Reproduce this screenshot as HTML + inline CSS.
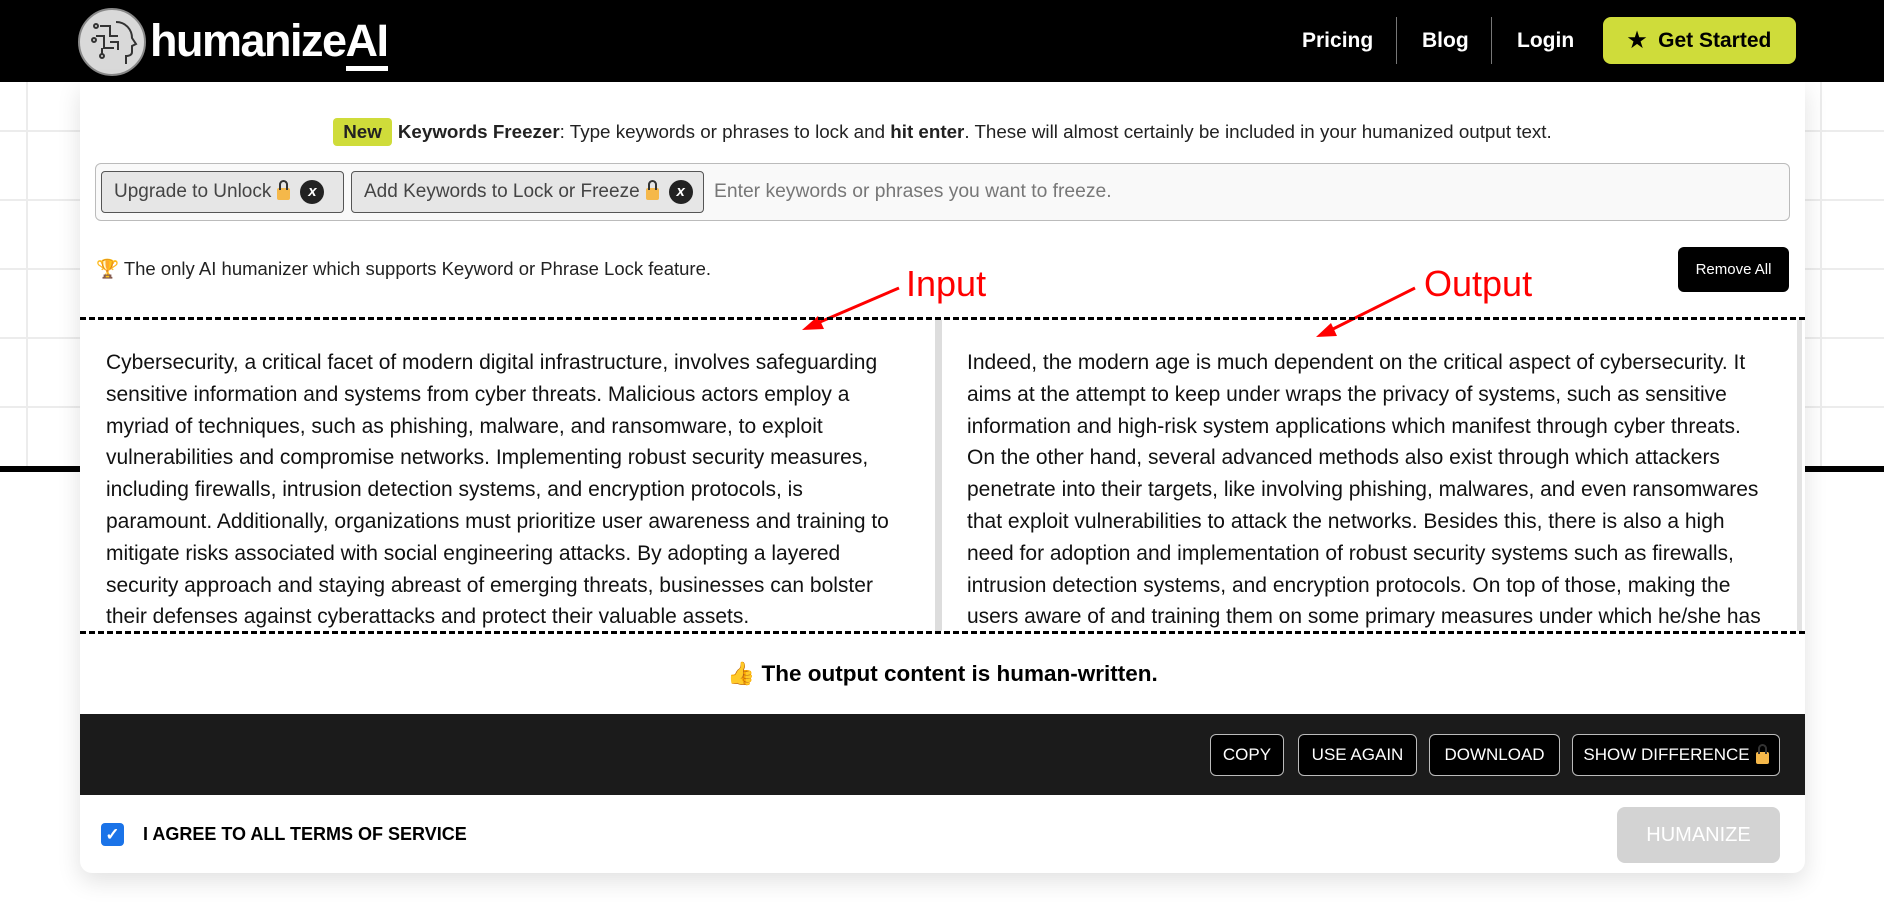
<!DOCTYPE html>
<html><head><meta charset="utf-8"><style>
*{box-sizing:border-box;margin:0;padding:0}
html,body{width:1884px;height:917px;overflow:hidden;background:#fff;font-family:"Liberation Sans",sans-serif;position:relative}
.grid{position:absolute;left:0;top:82px;width:1884px;height:387px;
background-image:linear-gradient(#ececec 2px,transparent 2px),linear-gradient(90deg,#ececec 2px,transparent 2px);
background-size:69px 69px;background-position:26px 48px;}
.thick{position:absolute;left:0;top:466px;width:1884px;height:6px;background:#000}
header{position:absolute;left:0;top:0;width:1884px;height:82px;background:#000}
.logo{position:absolute;left:78px;top:8px;width:68px;height:68px;border-radius:50%;background:#d9d9d9;border:2px solid #888}
.brand{position:absolute;left:150px;top:15px;color:#fff;font-weight:bold;font-size:45px;letter-spacing:-1.5px}
.brand u{text-decoration:none;border-bottom:5px solid #fff;padding-bottom:0}
.nav{position:absolute;top:29px;color:#fff;font-weight:bold;font-size:21px}
.div{position:absolute;top:17px;width:1px;height:47px;background:#777}
.gs{position:absolute;left:1603px;top:17px;width:193px;height:47px;background:#cfdc3a;border-radius:8px;font-weight:bold;font-size:21px;color:#000;text-align:center;line-height:47px}
.card{position:absolute;left:80px;top:82px;width:1725px;height:791px;background:#fff;border-radius:0 0 12px 12px;box-shadow:0 8px 24px rgba(0,0,0,.12)}
.abs{position:absolute}
.kf{left:0;width:1725px;top:36px;text-align:center;font-size:18.8px;color:#222}
.new{display:inline-block;background:#cfdc3a;border-radius:4px;padding:3px 10px;font-weight:bold;margin-right:6px}
.inbox{left:15px;top:81px;width:1695px;height:58px;border:1px solid #bbb;border-radius:6px;background:#f9f9f9}
.chip{position:absolute;top:7px;height:42px;border:1px solid #555;border-radius:4px;background:#e6e6e6;font-size:19px;color:#444;line-height:40px;padding-left:12px;white-space:nowrap}
.x{display:inline-block;width:24px;height:24px;border-radius:50%;background:#222;color:#fff;font-size:15px;font-weight:bold;font-style:italic;text-align:center;line-height:24px;vertical-align:middle;margin-left:10px}
.lock{display:inline-block;width:13px;height:12px;background:#f5b84a;border-radius:2px;position:relative;vertical-align:middle;margin-left:6px;margin-top:4px}
.lock:before{content:"";position:absolute;left:2px;top:-8px;width:5px;height:8px;border:2px solid #333;border-bottom:none;border-radius:5px 5px 0 0}
.txt{font-size:21px;line-height:31.8px;color:#111;white-space:nowrap}
.btn{position:absolute;top:20px;height:42px;background:#000;border:1px solid #bbb;border-radius:6px;color:#fff;font-size:17px;line-height:40px;text-align:center}
</style></head><body>
<div class="grid"></div><div class="thick"></div>
<header>
<div class="logo"><svg width="64" height="64" viewBox="0 0 64 64"><g fill="none" stroke="#333" stroke-width="2"><path d="M36 12c10 0 16 8 16 16l4 6-4 2v6c0 3-3 4-6 4v8"/><path d="M20 16h10v10h8M16 26h8v12h10M22 44v-6M30 32h8v8"/><circle cx="16" cy="16" r="2"/><circle cx="14" cy="30" r="2"/><circle cx="22" cy="46" r="2"/></g></svg></div>
<div class="brand">humanize<u>AI</u></div>
<div class="nav" style="left:1302px">Pricing</div>
<div class="div" style="left:1396px"></div>
<div class="nav" style="left:1422px">Blog</div>
<div class="div" style="left:1491px"></div>
<div class="nav" style="left:1517px">Login</div>
<div class="gs">★&nbsp; Get Started</div>
</header>
<div class="card">
<div class="abs kf"><span class="new">New</span><b>Keywords Freezer</b>: Type keywords or phrases to lock and <b>hit enter</b>. These will almost certainly be included in your humanized output text.</div>
<div class="abs inbox">
<div class="chip" style="left:5px;width:243px">Upgrade to Unlock<span class="lock"></span><span class="x">x</span></div>
<div class="chip" style="left:255px;width:353px">Add Keywords to Lock or Freeze<span class="lock"></span><span class="x">x</span></div>
<div class="abs" style="left:618px;top:17px;font-size:19.3px;color:#777">Enter keywords or phrases you want to freeze.</div>
</div>
<div class="abs" style="left:16px;top:176px;font-size:18.5px;color:#222">🏆 The only AI humanizer which supports Keyword or Phrase Lock feature.</div>
<div class="abs" style="left:1598px;top:165px;width:111px;height:45px;background:#000;border-radius:6px;color:#fff;font-size:15px;text-align:center;line-height:45px">Remove All</div>
<div class="abs" style="left:826px;top:181px;font-size:36px;color:#f00">Input</div>
<div class="abs" style="left:1344px;top:181px;font-size:36px;color:#f00">Output</div>
<svg class="abs" style="left:0;top:0" width="1725" height="791"><g stroke="#f00" stroke-width="3" fill="#f00"><line x1="819" y1="206" x2="733" y2="243"/><polygon points="722,248 738,234 744,247" stroke="none"/><line x1="1335" y1="206" x2="1247" y2="250"/><polygon points="1236,255 1251,241 1257,254" stroke="none"/></g></svg>
<div class="abs" style="left:0;top:235px;width:1725px;border-top:3px dashed #000"></div>
<div class="abs" style="left:0;top:549px;width:1725px;border-top:3px dashed #000"></div>
<div class="abs" style="left:855px;top:238px;width:7px;height:311px;background:#ddd"></div>
<div class="abs" style="left:1717px;top:238px;width:5px;height:311px;background:#e3e3e3"></div>
<div class="abs txt" style="left:26px;top:265px">Cybersecurity, a critical facet of modern digital infrastructure, involves safeguarding<br>sensitive information and systems from cyber threats. Malicious actors employ a<br>myriad of techniques, such as phishing, malware, and ransomware, to exploit<br>vulnerabilities and compromise networks. Implementing robust security measures,<br>including firewalls, intrusion detection systems, and encryption protocols, is<br>paramount. Additionally, organizations must prioritize user awareness and training to<br>mitigate risks associated with social engineering attacks. By adopting a layered<br>security approach and staying abreast of emerging threats, businesses can bolster<br>their defenses against cyberattacks and protect their valuable assets.</div>
<div class="abs txt" style="left:887px;top:265px">Indeed, the modern age is much dependent on the critical aspect of cybersecurity. It<br>aims at the attempt to keep under wraps the privacy of systems, such as sensitive<br>information and high-risk system applications which manifest through cyber threats.<br>On the other hand, several advanced methods also exist through which attackers<br>penetrate into their targets, like involving phishing, malwares, and even ransomwares<br>that exploit vulnerabilities to attack the networks. Besides this, there is also a high<br>need for adoption and implementation of robust security systems such as firewalls,<br>intrusion detection systems, and encryption protocols. On top of those, making the<br>users aware of and training them on some primary measures under which he/she has</div>
<div class="abs" style="left:0;top:579px;width:1725px;text-align:center;font-size:22.5px;font-weight:bold;color:#000">👍 The output content is human-written.</div>
<div class="abs" style="left:0;top:632px;width:1725px;height:81px;background:#1b1b1b">
<div class="btn" style="left:1130px;width:74px">COPY</div>
<div class="btn" style="left:1218px;width:119px">USE AGAIN</div>
<div class="btn" style="left:1349px;width:131px">DOWNLOAD</div>
<div class="btn" style="left:1492px;width:208px">SHOW DIFFERENCE<span class="lock"></span></div>
</div>
<div class="abs" style="left:21px;top:741px;width:23px;height:23px;background:#1a73e8;border-radius:4px;color:#fff;font-size:17px;text-align:center;line-height:23px;font-weight:bold">✓</div>
<div class="abs" style="left:63px;top:742px;font-size:18px;font-weight:bold;color:#000">I AGREE TO ALL TERMS OF SERVICE</div>
<div class="abs" style="left:1537px;top:725px;width:163px;height:56px;background:#d3d3d3;border-radius:8px;color:#fff;font-size:20px;text-align:center;line-height:56px">HUMANIZE</div>
</div>
</body></html>
